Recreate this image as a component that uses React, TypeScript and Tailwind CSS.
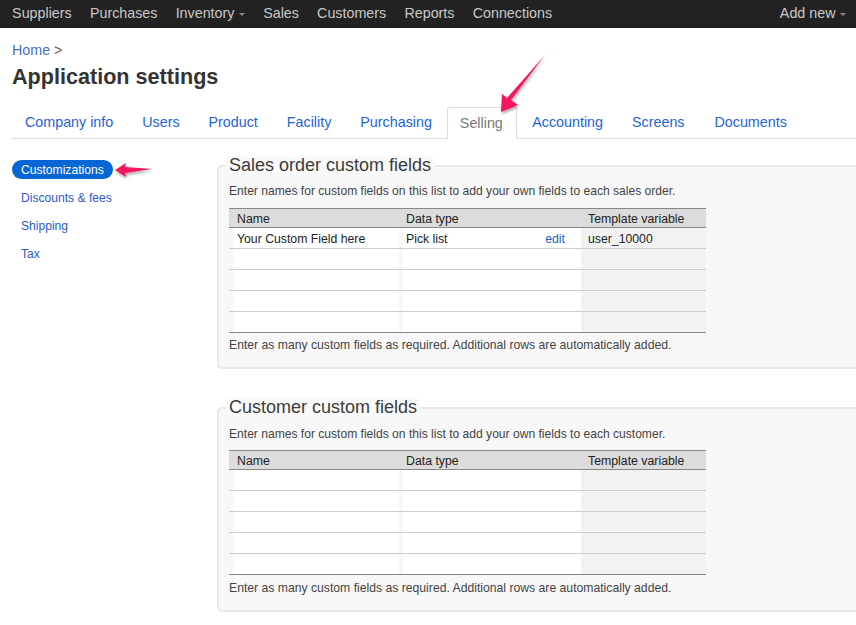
import React from "react";

const navItems = [
  ["Suppliers", false],
  ["Purchases", false],
  ["Inventory", true],
  ["Sales", false],
  ["Customers", false],
  ["Reports", false],
  ["Connections", false],
] as const;

const tabs = ["Company info", "Users", "Product", "Facility", "Purchasing", "Selling", "Accounting", "Screens", "Documents"];

function Caret() {
  return <span className="ml-[4.5px] inline-block h-0 w-0 border-x-[3px] border-t-[3px] border-x-transparent border-t-[#888] align-middle" />;
}

function Row({ name, type, edit, variable, last }: { name?: string; type?: string; edit?: boolean; variable?: string; last?: boolean }) {
  return (
    <div className={`flex h-[21px] border-b text-[12.25px] leading-[22px] text-[#222] ${last ? "border-[#888]" : "border-[#ccc]"}`}>
      <div className="ml-[5px] w-[165px] bg-white pl-[3px]">{name}</div>
      <div className="ml-[4px] flex w-[178px] justify-between bg-white pl-[3px] pr-[16px]">
        <span>{type}</span>
        {edit && <span className="text-[#1a5fc0]">edit</span>}
      </div>
      <div className="flex-1 bg-[#f2f2f2] pl-[7px]">{variable}</div>
    </div>
  );
}

function Panel({ title, desc, first }: { title: string; desc: string; first?: boolean }) {
  return (
    <fieldset className="mr-[-12px] rounded-[5px] border-2 border-[#e8e8e8] bg-[#f8f8f8] bg-[radial-gradient(#f4f4f4_1px,transparent_1px)] bg-[length:3px_3px] pb-[14px] pl-[10px]">
      <legend className="ml-[-3px] rounded-[4px] bg-[#f9f9f9] px-[3px] text-[18px] leading-[19px] text-[#3c3c3c]">{title}</legend>
      <p className={`${first ? "mt-[8px]" : "mt-[9px]"} text-[12.08px] leading-[16px] text-[#444]`}>{desc}</p>
      <div className={`${first ? "mt-[9px]" : "mt-[8px]"} w-[477px]`}>
        <div className="flex h-[20px] border-y-[1.5px] border-y-[#888] bg-[#dcdcdc] text-[12.3px] leading-[20px] text-[#222]">
          <div className="w-[177px] pl-[8px]">Name</div>
          <div className="w-[182px]">Data type</div>
          <div>Template variable</div>
        </div>
        {first ? <Row name="Your Custom Field here" type="Pick list" edit variable="user_10000" /> : <Row />}
        <Row />
        <Row />
        <Row />
        <Row last />
      </div>
      <p className={`${first ? "mt-[4px]" : "mt-[5px]"} text-[12.2px] leading-[16px] text-[#444]`}>Enter as many custom fields as required. Additional rows are automatically added.</p>
    </fieldset>
  );
}

export default function App() {
  return (
    <div className="relative h-[625px] w-[856px] overflow-hidden bg-white font-['Liberation_Sans',Arial,sans-serif]">
      <nav className="flex h-[28px] items-center justify-between bg-[#222] pl-[3px] pr-[10px] text-[14.3px] text-[#c8c8c8]">
        <div className="flex">
          {navItems.map(([label, caret]) => (
            <span key={label} className="px-[9.1px]">
              {label}
              {caret && <Caret />}
            </span>
          ))}
        </div>
        <span>
          Add new
          <Caret />
        </span>
      </nav>

      <div className="pl-[12px] pt-[13px]">
        <div className="text-[14.3px] leading-[18px] text-[#666]">
          <span className="text-[#4a6fc0]">Home</span> &gt;
        </div>
        <h1 className="mt-[4px] text-[21.6px] font-bold leading-[28px] text-[#333]">Application settings</h1>
      </div>

      <div className="ml-[12px] mt-[16px] h-[32px] border-b border-[#ddd]">
        <div className="ml-[-1.5px] flex h-[32px] items-end text-[14.3px]">
          {tabs.map((t) =>
            t === "Selling" ? (
              <span key={t} className="relative ml-[0.5px] mr-[1px] h-[32px] rounded-t-[3px] border border-b-white border-[#ddd] bg-white pl-[12px] pr-[13px] pt-[5px] leading-[20px] text-[#777]">
                {t}
              </span>
            ) : (
              <span key={t} className="h-[32px] px-[14.5px] pt-[5px] leading-[20px] text-[#1f63d8] last:ml-[1px]">
                {t}
              </span>
            )
          )}
        </div>
      </div>

      <div className="mt-[17px] flex">
        <aside className="ml-[12px] w-[205px] shrink-0 pt-[4px] text-[12.1px]">
          <div className="h-[19px] w-[101px] rounded-full bg-[#0766d6] pl-[9px] font-medium leading-[20px] text-white">Customizations</div>
          <div className="mt-[10px] pl-[9px] leading-[18px] text-[#2b5bc8]">Discounts &amp; fees</div>
          <div className="mt-[10px] pl-[9px] leading-[18px] text-[#2b5bc8]">Shipping</div>
          <div className="mt-[10px] pl-[9px] leading-[18px] text-[#2b5bc8]">Tax</div>
        </aside>
        <main className="flex min-w-0 flex-1 flex-col gap-[29px]">
          <Panel first title="Sales order custom fields" desc="Enter names for custom fields on this list to add your own fields to each sales order." />
          <Panel title="Customer custom fields" desc="Enter names for custom fields on this list to add your own fields to each customer." />
        </main>
      </div>

      <svg className="pointer-events-none absolute left-0 top-0" width="856" height="625" viewBox="0 0 856 625">
        <defs>
          <filter id="sh" x="-30%" y="-30%" width="160%" height="160%">
            <feDropShadow dx="1" dy="2" stdDeviation="1.5" floodColor="#000" floodOpacity="0.35" />
          </filter>
        </defs>
        <polygon points="545,55 511,100 518,105 501,112 502,94 507,98" fill="#f5135f" filter="url(#sh)" />
        <polygon points="115,170 126,163 125,167 152,169 125,173 126,177" fill="#f5135f" filter="url(#sh)" />
      </svg>
    </div>
  );
}
